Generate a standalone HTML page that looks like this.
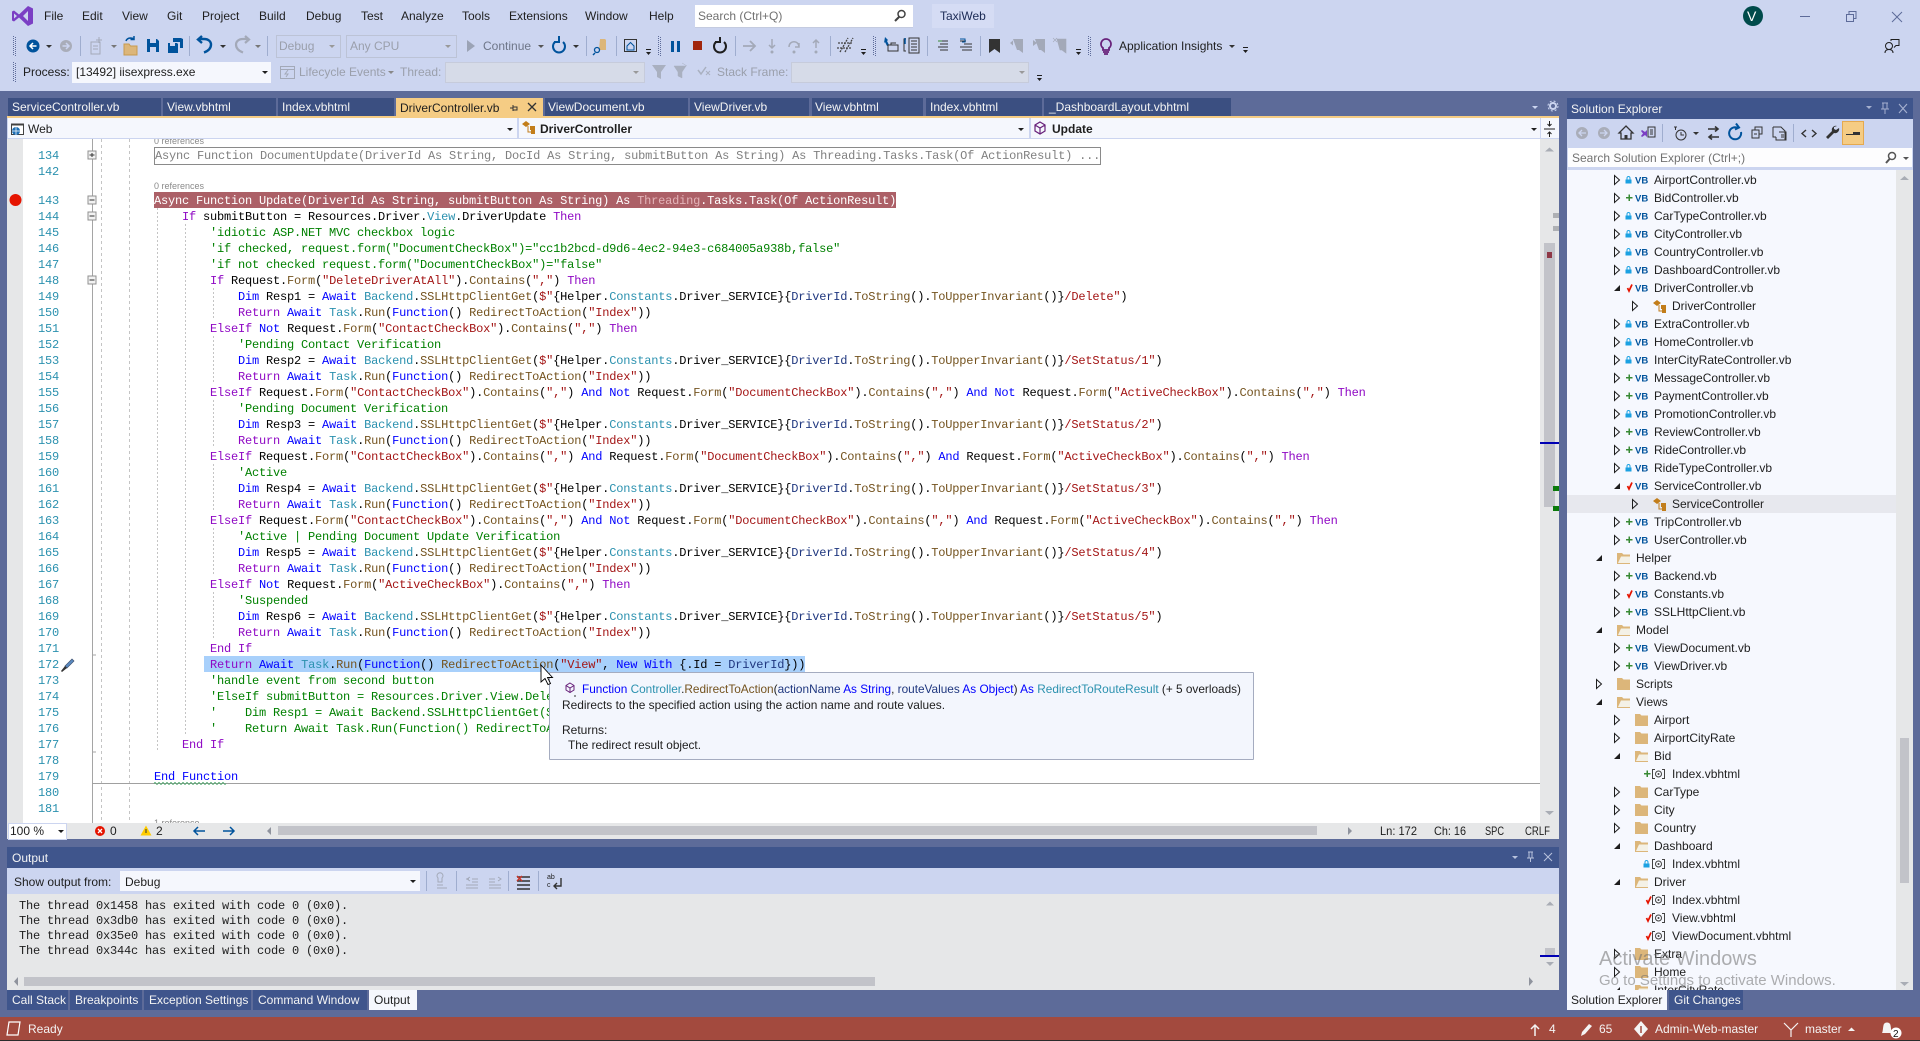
<!DOCTYPE html>
<html lang="en"><head><meta charset="utf-8"><title>TaxiWeb - Visual Studio</title>
<style>
html,body{margin:0;padding:0;width:1920px;height:1041px;overflow:hidden;background:#5d6b99}
.b{position:absolute}
pre{position:absolute;margin:0;font:12px/16px "Liberation Mono",monospace;letter-spacing:-.2px;color:#000;white-space:pre}
.k{color:#00f}.c{color:#8f08c4}.t{color:#2b91af}.m{color:#74531f}.s{color:#a31515}.g{color:#008000}.p{color:#1f377f}
svg text{font-family:"Liberation Sans",sans-serif;font-size:12px;fill:#1e1e1e;white-space:pre}
svg .w{fill:#f4f4f4}.d{fill:#9a9fab}
svg .vb{font-weight:bold;font-size:9.5px;fill:#00539c}
svg .mo{font-family:"Liberation Mono",monospace;letter-spacing:-.2px}
svg .rf{font-size:9px;fill:#8a8a8a}
svg .ln{font-family:"Liberation Mono",monospace;letter-spacing:-.2px;fill:#2b91af;text-anchor:end}
</style></head><body>
<div class="b" style="left:0;top:0;width:1920px;height:91px;background:#ccd5f0"></div>
<div class="b" style="left:695px;top:5px;width:218px;height:22px;background:#fff;border-bottom:1px solid #c4cbe0"></div>
<div class="b" style="left:932px;top:4px;width:62px;height:24px;background:#d5dcf4"></div>
<div class="b" style="left:276px;top:35px;width:63px;height:21px;border:1px solid #bcc3d6"></div>
<div class="b" style="left:346px;top:35px;width:109px;height:21px;border:1px solid #bcc3d6"></div>
<div class="b" style="left:72px;top:62px;width:199px;height:21px;background:#f5f7fd"></div>
<div class="b" style="left:445px;top:62px;width:200px;height:21px;background:#d6dbe8;border:1px solid #c6cbdb;box-sizing:border-box"></div>
<div class="b" style="left:791px;top:62px;width:238px;height:21px;background:#d6dbe8;border:1px solid #c6cbdb;box-sizing:border-box"></div>
<!-- tabs -->
<div class="b" style="left:8px;top:98px;width:153px;height:18px;background:#3b4f81"></div>
<div class="b" style="left:163px;top:98px;width:113px;height:18px;background:#3b4f81"></div>
<div class="b" style="left:278px;top:98px;width:116px;height:18px;background:#3b4f81"></div>
<div class="b" style="left:396px;top:98px;width:147px;height:18px;background:#f5cc84"></div>
<div class="b" style="left:545px;top:98px;width:143px;height:18px;background:#3b4f81"></div>
<div class="b" style="left:690px;top:98px;width:119px;height:18px;background:#3b4f81"></div>
<div class="b" style="left:812px;top:98px;width:111px;height:18px;background:#3b4f81"></div>
<div class="b" style="left:926px;top:98px;width:116px;height:18px;background:#3b4f81"></div>
<div class="b" style="left:1044px;top:98px;width:187px;height:18px;background:#3b4f81"></div>
<div class="b" style="left:7px;top:116px;width:1552px;height:2px;background:#f5cc84"></div>
<!-- nav bar -->
<div class="b" style="left:7px;top:118px;width:1552px;height:21px;background:#ccd5f0"></div>
<div class="b" style="left:8px;top:118px;width:509px;height:20px;background:#f5f7fd"></div>
<div class="b" style="left:519px;top:118px;width:510px;height:20px;background:#f5f7fd"></div>
<div class="b" style="left:1031px;top:118px;width:509px;height:20px;background:#f5f7fd"></div>
<div class="b" style="left:1541px;top:118px;width:18px;height:20px;background:#f5f7fd"></div>
<!-- editor -->
<div class="b" style="left:7px;top:139px;width:1533px;height:684px;background:#fff"></div>
<div class="b" style="left:7px;top:139px;width:16px;height:684px;background:#e6e7e8"></div>
<div class="b" style="left:1540px;top:139px;width:19px;height:684px;background:#e6e7e8"></div>
<div class="b" style="left:1544px;top:243px;width:11px;height:264px;background:#c2c3c9"></div>
<div class="b" style="left:154px;top:192px;width:742px;height:16px;background:#ac6067"></div>
<div class="b" style="left:204px;top:656px;width:601px;height:16px;background:#a8d0fb"></div>
<div class="b" style="left:154px;top:147px;width:945px;height:16px;border:1px solid #8a8a8a"></div>
<pre style="left:155px;top:148px;color:#808080">Async Function DocumentUpdate(DriverId As String, DocId As String, submitButton As String) As Threading.Tasks.Task(Of ActionResult) ...</pre>
<pre style="left:154px;top:193px"><span style="color:#fff">Async Function Update(DriverId As String, submitButton As String) As <span style="color:#e3b3b8">Threading</span>.Tasks.Task(Of ActionResult)</span>
    <span class="c">If</span> submitButton = Resources.Driver.<span class="t">View</span>.DriverUpdate <span class="c">Then</span>
        <span class="g">'idiotic ASP.NET MVC checkbox logic</span>
        <span class="g">'if checked, request.form("DocumentCheckBox")="cc1b2bcd-d9d6-4ec2-94e3-c684005a938b,false"</span>
        <span class="g">'if not checked request.form("DocumentCheckBox")="false"</span>
        <span class="c">If</span> Request.<span class="m">Form</span>(<span class="s">"DeleteDriverAtAll"</span>).<span class="m">Contains</span>(<span class="s">","</span>) <span class="c">Then</span>
            <span class="k">Dim</span> Resp1 = <span class="k">Await</span> <span class="t">Backend</span>.<span class="m">SSLHttpClientGet</span>(<span class="s">$"</span>{Helper.<span class="t">Constants</span>.Driver_SERVICE}{<span class="p">DriverId</span>.<span class="m">ToString</span>().<span class="m">ToUpperInvariant</span>()}<span class="s">/Delete"</span>)
            <span class="c">Return</span> <span class="k">Await</span> <span class="t">Task</span>.<span class="m">Run</span>(<span class="k">Function</span>() <span class="m">RedirectToAction</span>(<span class="s">"Index"</span>))
        <span class="c">ElseIf</span> <span class="k">Not</span> Request.<span class="m">Form</span>(<span class="s">"ContactCheckBox"</span>).<span class="m">Contains</span>(<span class="s">","</span>) <span class="c">Then</span>
            <span class="g">'Pending Contact Verification</span>
            <span class="k">Dim</span> Resp2 = <span class="k">Await</span> <span class="t">Backend</span>.<span class="m">SSLHttpClientGet</span>(<span class="s">$"</span>{Helper.<span class="t">Constants</span>.Driver_SERVICE}{<span class="p">DriverId</span>.<span class="m">ToString</span>().<span class="m">ToUpperInvariant</span>()}<span class="s">/SetStatus/1"</span>)
            <span class="c">Return</span> <span class="k">Await</span> <span class="t">Task</span>.<span class="m">Run</span>(<span class="k">Function</span>() <span class="m">RedirectToAction</span>(<span class="s">"Index"</span>))
        <span class="c">ElseIf</span> Request.<span class="m">Form</span>(<span class="s">"ContactCheckBox"</span>).<span class="m">Contains</span>(<span class="s">","</span>) <span class="k">And</span> <span class="k">Not</span> Request.<span class="m">Form</span>(<span class="s">"DocumentCheckBox"</span>).<span class="m">Contains</span>(<span class="s">","</span>) <span class="k">And</span> <span class="k">Not</span> Request.<span class="m">Form</span>(<span class="s">"ActiveCheckBox"</span>).<span class="m">Contains</span>(<span class="s">","</span>) <span class="c">Then</span>
            <span class="g">'Pending Document Verification</span>
            <span class="k">Dim</span> Resp3 = <span class="k">Await</span> <span class="t">Backend</span>.<span class="m">SSLHttpClientGet</span>(<span class="s">$"</span>{Helper.<span class="t">Constants</span>.Driver_SERVICE}{<span class="p">DriverId</span>.<span class="m">ToString</span>().<span class="m">ToUpperInvariant</span>()}<span class="s">/SetStatus/2"</span>)
            <span class="c">Return</span> <span class="k">Await</span> <span class="t">Task</span>.<span class="m">Run</span>(<span class="k">Function</span>() <span class="m">RedirectToAction</span>(<span class="s">"Index"</span>))
        <span class="c">ElseIf</span> Request.<span class="m">Form</span>(<span class="s">"ContactCheckBox"</span>).<span class="m">Contains</span>(<span class="s">","</span>) <span class="k">And</span> Request.<span class="m">Form</span>(<span class="s">"DocumentCheckBox"</span>).<span class="m">Contains</span>(<span class="s">","</span>) <span class="k">And</span> Request.<span class="m">Form</span>(<span class="s">"ActiveCheckBox"</span>).<span class="m">Contains</span>(<span class="s">","</span>) <span class="c">Then</span>
            <span class="g">'Active</span>
            <span class="k">Dim</span> Resp4 = <span class="k">Await</span> <span class="t">Backend</span>.<span class="m">SSLHttpClientGet</span>(<span class="s">$"</span>{Helper.<span class="t">Constants</span>.Driver_SERVICE}{<span class="p">DriverId</span>.<span class="m">ToString</span>().<span class="m">ToUpperInvariant</span>()}<span class="s">/SetStatus/3"</span>)
            <span class="c">Return</span> <span class="k">Await</span> <span class="t">Task</span>.<span class="m">Run</span>(<span class="k">Function</span>() <span class="m">RedirectToAction</span>(<span class="s">"Index"</span>))
        <span class="c">ElseIf</span> Request.<span class="m">Form</span>(<span class="s">"ContactCheckBox"</span>).<span class="m">Contains</span>(<span class="s">","</span>) <span class="k">And</span> <span class="k">Not</span> Request.<span class="m">Form</span>(<span class="s">"DocumentCheckBox"</span>).<span class="m">Contains</span>(<span class="s">","</span>) <span class="k">And</span> Request.<span class="m">Form</span>(<span class="s">"ActiveCheckBox"</span>).<span class="m">Contains</span>(<span class="s">","</span>) <span class="c">Then</span>
            <span class="g">'Active | Pending Document Update Verification</span>
            <span class="k">Dim</span> Resp5 = <span class="k">Await</span> <span class="t">Backend</span>.<span class="m">SSLHttpClientGet</span>(<span class="s">$"</span>{Helper.<span class="t">Constants</span>.Driver_SERVICE}{<span class="p">DriverId</span>.<span class="m">ToString</span>().<span class="m">ToUpperInvariant</span>()}<span class="s">/SetStatus/4"</span>)
            <span class="c">Return</span> <span class="k">Await</span> <span class="t">Task</span>.<span class="m">Run</span>(<span class="k">Function</span>() <span class="m">RedirectToAction</span>(<span class="s">"Index"</span>))
        <span class="c">ElseIf</span> <span class="k">Not</span> Request.<span class="m">Form</span>(<span class="s">"ActiveCheckBox"</span>).<span class="m">Contains</span>(<span class="s">","</span>) <span class="c">Then</span>
            <span class="g">'Suspended</span>
            <span class="k">Dim</span> Resp6 = <span class="k">Await</span> <span class="t">Backend</span>.<span class="m">SSLHttpClientGet</span>(<span class="s">$"</span>{Helper.<span class="t">Constants</span>.Driver_SERVICE}{<span class="p">DriverId</span>.<span class="m">ToString</span>().<span class="m">ToUpperInvariant</span>()}<span class="s">/SetStatus/5"</span>)
            <span class="c">Return</span> <span class="k">Await</span> <span class="t">Task</span>.<span class="m">Run</span>(<span class="k">Function</span>() <span class="m">RedirectToAction</span>(<span class="s">"Index"</span>))
        <span class="c">End If</span>
        <span class="c">Return</span> <span class="k">Await</span> <span class="t">Task</span>.<span class="m">Run</span>(<span class="k">Function</span>() <span class="m">RedirectToAction</span>(<span class="s">"View"</span>, <span class="k">New With</span> {.Id = <span class="p">DriverId</span>}))
        <span class="g">'handle event from second button</span>
        <span class="g">'ElseIf submitButton = Resources.Driver.View.Delete</span>
        <span class="g">'    Dim Resp1 = Await Backend.SSLHttpClientGet($"</span>
        <span class="g">'    Return Await Task.Run(Function() RedirectToAction</span>
    <span class="c">End If</span>

<span class="k">End Function</span></pre>
<!-- tooltip -->
<div class="b" style="left:549px;top:672px;width:703px;height:86px;background:#f3f6fd;border:1px solid #a5acc0;border-radius:1px"></div>
<!-- editor strip -->
<div class="b" style="left:7px;top:823px;width:1552px;height:16px;background:#e6e7e8"></div>
<div class="b" style="left:8px;top:823px;width:57px;height:15px;background:#fff;border:1px solid #ccd5f0"></div>
<div class="b" style="left:278px;top:826px;width:1039px;height:9px;background:#c2c3c9"></div>
<!-- output -->
<div class="b" style="left:7px;top:847px;width:1552px;height:21px;background:#3f558c"></div>
<div class="b" style="left:7px;top:868px;width:1552px;height:26px;background:#ccd5f0"></div>
<div class="b" style="left:120px;top:871px;width:300px;height:20px;background:#f5f7fd"></div>
<div class="b" style="left:7px;top:894px;width:1552px;height:96px;background:#e6e7e8"></div>
<pre style="left:19px;top:899px;line-height:15px;color:#1e1e1e">The thread 0x1458 has exited with code 0 (0x0).
The thread 0x3db0 has exited with code 0 (0x0).
The thread 0x35e0 has exited with code 0 (0x0).
The thread 0x344c has exited with code 0 (0x0).</pre>
<div class="b" style="left:24px;top:977px;width:851px;height:9px;background:#c2c3c9"></div>
<div class="b" style="left:1545px;top:948px;width:10px;height:7px;background:#c2c3c9"></div>
<div class="b" style="left:1540px;top:955px;width:19px;height:2px;background:#0000b4"></div>
<!-- bottom tabs -->
<div class="b" style="left:7px;top:990px;width:61px;height:20px;background:#3f558c"></div>
<div class="b" style="left:70px;top:990px;width:72px;height:20px;background:#3f558c"></div>
<div class="b" style="left:144px;top:990px;width:107px;height:20px;background:#3f558c"></div>
<div class="b" style="left:253px;top:990px;width:114px;height:20px;background:#3f558c"></div>
<div class="b" style="left:369px;top:990px;width:48px;height:20px;background:#f5f7fd"></div>
<!-- solution explorer -->
<div class="b" style="left:1567px;top:98px;width:346px;height:21px;background:#3f558c"></div>
<div class="b" style="left:1567px;top:119px;width:346px;height:28px;background:#ccd5f0"></div>
<div class="b" style="left:1567px;top:147px;width:346px;height:23px;background:#ccd5f0"></div>
<div class="b" style="left:1568px;top:148px;width:344px;height:19px;background:#fdfdfe"></div>
<div class="b" style="left:1567px;top:170px;width:329px;height:820px;background:#f6f8fe"></div>
<div class="b" style="left:1567px;top:495px;width:329px;height:18px;background:#e7e8ee"></div>
<div class="b" style="left:1896px;top:170px;width:17px;height:820px;background:#e6e7e8"></div>
<div class="b" style="left:1900px;top:738px;width:9px;height:145px;background:#c2c3c9"></div>
<div class="b" style="left:1567px;top:990px;width:100px;height:20px;background:#f5f7fd"></div>
<div class="b" style="left:1669px;top:990px;width:74px;height:20px;background:#3f558c"></div>
<div class="b" style="left:1842px;top:121px;width:20px;height:22px;background:#f5cc84;border:1px solid #e5a94f"></div>
<!-- status -->
<div class="b" style="left:0;top:1017px;width:1920px;height:23px;background:#a34a3e"></div>
<div class="b" style="left:0;top:1040px;width:1920px;height:1px;background:#2b2b2b"></div>

<svg class="b" style="left:0;top:0" width="1920" height="1041" viewBox="0 0 1920 1041">
<defs>
<clipPath id="ed"><rect x="7" y="139" width="1533" height="684"/></clipPath>
<clipPath id="tr"><rect x="1567" y="170" width="329" height="820"/></clipPath>
<g id="cr"><path d="M-.5-4.500L4.500 0L-.5 4.500Z" fill="none" stroke="#1e1e1e"/></g>
<g id="ex"><path d="M6-3V3H0Z" fill="#1e1e1e"/></g>
<g id="lk"><path d="M-.5 3.500V-.5h1V-2C.5-3.300 1.500-4 2.500-4S4.500-3.300 4.500-2V-.5h1v4ZM1.500-.5h2V-2c0-.5-.4-1-1-1s-1 .5-1 1Z" fill="#1ba1e2" fill-rule="evenodd"/></g>
<g id="pl"><path d="M2.500-3.500h1.500v2.500h2.500V.5H4V3H2.500V.5H0V-1h2.500Z" fill="#388a34"/></g>
<g id="chk"><path d="M.5 0L2 3L5-3.500" fill="none" stroke="#e51400" stroke-width="1.700"/></g>
<g id="fo"><path d="M0-6h5l1.500 1.500H13V6H0Z" fill="#dcb67a"/></g>
<g id="fop"><path d="M0-5h5l1.500 1.500H13V6H0Z" fill="#dcb67a"/><path d="M4-1.500H13V5H1Z" fill="#f4f1e6"/></g>
<g id="cl"><path d="M4-6L8-3L4 0L0-3ZM8-1h5v4H8ZM9 3h4v4H9Z" fill="#c27d1a"/><path d="M6-1V5H9" fill="none" stroke="#c27d1a"/></g>
<g id="at"><path d="M3-4.500H.5V4.500H3M10-4.500h2.500V4.500H10" fill="none" stroke="#424242"/><circle cx="6.500" cy="0" r="3" fill="none" stroke="#424242"/><circle cx="6.500" cy="0" r="1" fill="#424242"/></g>
<g id="dd"><path d="M0 0h6L3 3Z"/></g>
<g id="ov"><path d="M0 0h5v1H0ZM0 3h5L2.500 6Z" fill="#1e1e1e"/></g>
<g id="gr"><path d="M.5 0V20M2.500 1V20" stroke="#5d6b99" stroke-dasharray="1 1"/></g>
<g id="om"><rect x=".5" y=".5" width="8" height="8" fill="#f2f2f2" stroke="#909090"/><path d="M2 4.500h5" stroke="#333"/></g>
</defs>

<!-- title -->
<path d="M28 6L33 8.500V23.500L28 26L19 17.500L14 21.500L12 20.500V11.500L14 10.500L19 14.500ZM28 11L23 16L28 21ZM14 13.500V18.500L17 16Z" fill="#7b3fc4" fill-rule="evenodd"/>
<text x="44" y="20">File</text><text x="82" y="20">Edit</text><text x="122" y="20">View</text><text x="167" y="20">Git</text><text x="202" y="20">Project</text><text x="259" y="20">Build</text><text x="306" y="20">Debug</text><text x="361" y="20">Test</text><text x="401" y="20">Analyze</text><text x="462" y="20">Tools</text><text x="509" y="20">Extensions</text><text x="585" y="20">Window</text><text x="649" y="20">Help</text>
<text x="698" y="20" fill="#6d6d6d" style="fill:#717171">Search (Ctrl+Q)</text>
<circle cx="901.500" cy="14" r="3.500" fill="none" stroke="#424242" stroke-width="1.500"/><path d="M899 17L895 21" stroke="#424242" stroke-width="2"/>
<text x="940" y="20" style="fill:#1c2b55">TaxiWeb</text>
<circle cx="1753" cy="16" r="10" fill="#004b4b"/><text x="1747" y="21" style="font-size:14px;fill:#fff">V</text>
<path d="M1800 16.500h10" stroke="#5d6b99"/><path d="M1846.500 14.500h7v7h-7ZM1849 14V11.500h7v7h-2" fill="none" stroke="#5d6b99"/><path d="M1892 12L1902 22M1902 12L1892 22" stroke="#5d6b99"/>
<circle cx="1889" cy="46" r="3.500" fill="none" stroke="#1e1e1e"/><path d="M1885 53c0-3 2-3.500 4-3.500s4 .5 4 3.500M1891 41v-1.500h8v6h-3l-2 2" fill="none" stroke="#1e1e1e"/>

<!-- toolbar row 1 -->
<use href="#gr" x="13" y="36"/>
<circle cx="33" cy="46" r="6.500" fill="#00539c"/><path d="M36.500 46h-6M33 43l-3 3 3 3" fill="none" stroke="#fff" stroke-width="1.500"/>
<use href="#dd" x="46" y="45" fill="#333"/>
<circle cx="66" cy="46" r="6" fill="#a9adb9"/><path d="M62.500 46h6M66 43l3 3-3 3" fill="none" stroke="#ccd5f0" stroke-width="1.500"/>
<path d="M80.500 36V56M189.500 36V56M267.500 36V56M586.500 36V56M616.500 36V56M735.500 36V56M830.500 36V56M927.500 36V56M980.500 36V56" stroke="#9fadcf"/>
<path d="M91 42h9v12H91ZM93 46h5M93 49h5" fill="none" stroke="#a3a9b8"/><path d="M99 37v6M96 40h6" stroke="#a3a9b8"/>
<use href="#dd" x="111" y="45" fill="#777"/>
<path d="M124 44h5l1.500 2H137v9H124Z" fill="#dcb67a" stroke="#c79b4f"/><path d="M126 41c1-3 5-4 8-2M134 36v3.500h-3.500" fill="none" stroke="#00539c" stroke-width="1.500"/>
<path d="M147 39h10l2 2v11h-12ZM150 39v4h6v-4ZM150 47h6v5h-6Z" fill="#00539c" fill-rule="evenodd"/>
<path d="M168 43h9l1 1v9h-10ZM170 43v3h5v-3Z M173 38h8l2 1v9h-3V42h-7Z" fill="#00539c" fill-rule="evenodd"/>
<path d="M199 39h5c5 0 7 3 7 5.500c0 4-3 6.500-7 8M202 36l-4 3.500 4 3.500" fill="none" stroke="#00539c" stroke-width="2.400"/>
<use href="#dd" x="220" y="45" fill="#333"/>
<path d="M248 39h-5c-5 0-7 3-7 5.500c0 4 3 6.500 7 8M245 36l4 3.500-4 3.500" fill="none" stroke="#a3a9b8" stroke-width="2.200"/>
<use href="#dd" x="255" y="45" fill="#777"/>
<text x="279" y="50" class="d">Debug</text><use href="#dd" x="329" y="45" fill="#999"/>
<text x="350" y="50" class="d">Any CPU</text><use href="#dd" x="445" y="45" fill="#999"/>
<path d="M467 40L475 46L467 52Z" fill="#9ba3b5"/><text x="483" y="50" style="fill:#6e7688">Continue</text><use href="#dd" x="538" y="45" fill="#555"/>
<path d="M555 42a6 6 0 1 0 8 0M559 36v6h-5" fill="none" stroke="#00539c" stroke-width="2"/>
<use href="#dd" x="573" y="45" fill="#333"/>
<path d="M600 39h5l1 1v10h-7" fill="#dcb67a"/><circle cx="597" cy="50" r="2.500" fill="none" stroke="#00539c" stroke-width="1.300"/><path d="M595 53l-2 2" stroke="#00539c" stroke-width="1.500"/>
<rect x="624.500" y="39.500" width="12" height="12" fill="none" stroke="#333"/><path d="M627 46l3.500-3.500L634 46v4h-7Z" fill="none" stroke="#00539c"/>
<use href="#ov" x="646" y="49"/><use href="#gr" x="658" y="36"/>
<path d="M671 41h3v11h-3ZM677 41h3v11h-3Z" fill="#00539c"/>
<rect x="693" y="41" width="9" height="9" fill="#a1260d"/>
<path d="M716 42a6 6 0 1 0 8 0M720 37v5h-5" fill="none" stroke="#1e1e1e" stroke-width="2"/>
<path d="M743 46h12M750 41l5 5-5 5" fill="none" stroke="#a3a9b8" stroke-width="1.800"/>
<path d="M772 39v8M769 45l3 3 3-3" fill="none" stroke="#a3a9b8" stroke-width="1.500"/><circle cx="772" cy="52" r="1.500" fill="#a3a9b8"/>
<path d="M789 47c0-7 10-7 10 0M799 43v4h-4" fill="none" stroke="#a3a9b8" stroke-width="1.500"/><circle cx="794" cy="52" r="1.500" fill="#a3a9b8"/>
<path d="M816 48v-8M813 43l3-3 3 3" fill="none" stroke="#a3a9b8" stroke-width="1.500"/><circle cx="816" cy="52" r="1.500" fill="#a3a9b8"/>
<path d="M840 52L848 38M845 52L853 38M838 43H853M837 48H852" stroke="#454545" stroke-width="1.300" stroke-dasharray="2 1"/>
<use href="#ov" x="861" y="49"/><use href="#gr" x="873" y="36"/>
<path d="M885 37l3 3-1 1 2 4-2 1-2-4-1 1Z" fill="#00539c"/><path d="M888 45h10v6h-10ZM891 45v-2h5" fill="none" stroke="#333"/>
<path d="M906 39h-2v12h2M909 38h10v15h-10ZM911 41h6M911 44h6M911 47h6M911 50h6" fill="none" stroke="#333"/><path d="M905 38v6" stroke="#00539c" stroke-width="1.500"/>
<path d="M938 41h10M940 44h8M938 47h10M940 50h8" stroke="#333"/><path d="M938 41h4" stroke="#388a34"/>
<path d="M960 41h6M964 44h8M960 47h12M962 50h10" stroke="#333"/><path d="M960 39h5v3h-3" fill="none" stroke="#00539c"/>
<path d="M989 39h11v14l-5.500-4L989 53Z" fill="#333"/>
<path d="M1013 39h10v14l-4-3-2 0ZM1010 43l3-2.500v5" fill="#a3a9b8"/>
<path d="M1035 39h10v14l-4-3-2 0ZM1033 40l4 3-4 3" fill="#a3a9b8"/>
<path d="M1057 39h9v14l-4-3-2 0ZM1053 38l4 4M1057 38l-4 4" fill="#a3a9b8" stroke="#a3a9b8" stroke-width=".6"/>
<use href="#ov" x="1076" y="49"/><use href="#gr" x="1088" y="36"/>
<path d="M1106 39a5 5 0 0 1 3 9v2h-6v-2a5 5 0 0 1 3-9ZM1103 52h6M1104 54h4" fill="none" stroke="#68217a" stroke-width="1.800"/>
<text x="1119" y="50">Application Insights</text><use href="#dd" x="1229" y="45" fill="#333"/><use href="#ov" x="1243" y="47"/>

<!-- toolbar row 2 -->
<use href="#gr" x="13" y="62"/>
<text x="23" y="76">Process:</text><text x="76" y="76">[13492] iisexpress.exe</text><use href="#dd" x="262" y="71" fill="#1e1e1e"/>
<rect x="280.500" y="66.500" width="14" height="12" fill="none" stroke="#a3a9b8"/><path d="M280 69.500h14M288 70l-3 4h3l-2 3" fill="none" stroke="#a3a9b8"/>
<text x="299" y="76" class="d">Lifecycle Events</text><use href="#dd" x="388" y="71" fill="#888"/>
<text x="400" y="76" class="d">Thread:</text><use href="#dd" x="633" y="71" fill="#999"/>
<path d="M652 65h14l-5 7v7l-4-2v-5Z" fill="#a9b0c0"/><path d="M674 66h12l-4 6v6l-4-2v-4ZM682 63l5 3" fill="#a9b0c0" stroke="#a9b0c0" stroke-width=".5"/><path d="M698 70l3 4 5-7" fill="none" stroke="#a9b0c0" stroke-width="1.500"/><path d="M706 71l4 4M710 71l-4 4" stroke="#a9b0c0"/>
<text x="717" y="76" class="d">Stack Frame:</text><use href="#dd" x="1019" y="71" fill="#999"/><use href="#ov" x="1037" y="75"/>

<!-- tabs -->
<g class="tabs"><text x="12" y="111" class="w">ServiceController.vb</text><text x="167" y="111" class="w">View.vbhtml</text><text x="282" y="111" class="w">Index.vbhtml</text><text x="400" y="112">DriverController.vb</text><text x="548" y="111" class="w">ViewDocument.vb</text><text x="694" y="111" class="w">ViewDriver.vb</text><text x="815" y="111" class="w">View.vbhtml</text><text x="930" y="111" class="w">Index.vbhtml</text><text x="1049" y="111" class="w">_DashboardLayout.vbhtml</text></g>
<path d="M510 108h3M513 105v6M513 107h4v3h-4" fill="none" stroke="#333"/><path d="M528 103l8 8M536 103l-8 8" stroke="#333" stroke-width="1.300"/>
<use href="#dd" x="1532" y="106" fill="#ccd5f0"/><circle cx="1553" cy="106" r="3" fill="none" stroke="#ccd5f0" stroke-width="2"/><circle cx="1553" cy="106" r="5" fill="none" stroke="#ccd5f0" stroke-dasharray="2 2"/>

<!-- nav -->
<rect x="11.500" y="124.500" width="12" height="10" fill="#fff" stroke="#424242"/><path d="M11 124.500h13" stroke="#424242" stroke-width="2"/><circle cx="16" cy="131" r="4" fill="#1f6fb5"/><path d="M12 131h8M16 127v8" stroke="#fff" stroke-width=".7"/>
<text x="28" y="133">Web</text><use href="#dd" x="507" y="128" fill="#1e1e1e"/>
<use href="#cl" x="522" y="127"/><text x="540" y="133" style="font-weight:bold">DriverController</text><use href="#dd" x="1018" y="128" fill="#1e1e1e"/>
<path d="M1040 122l5 3v6l-5 3-5-3v-6ZM1035 125l5 3 5-3M1040 128v6" fill="none" stroke="#68217a" stroke-width="1.200"/><text x="1052" y="133" style="font-weight:bold">Update</text><use href="#dd" x="1531" y="128" fill="#1e1e1e"/>
<path d="M1544 129h11M1549.500 121v5M1547.500 124l2 2 2-2M1549.500 137v-5M1547.500 134l2-2 2 2" fill="none" stroke="#1e1e1e"/>

<!-- gutter and margins -->
<path d="M92.500 139V823" stroke="#a5a5a5"/>
<path d="M101.500 139V823M129.500 139V823" stroke="#c4c4c4" stroke-dasharray="3 3"/>
<path d="M157.500 208V752M185.500 224V736M213.500 288V320M213.500 336V384M213.500 400V448M213.500 464V512M213.500 528V576M213.500 592V640" stroke="#c4c4c4" stroke-dasharray="2 2"/>
<path d="M92 655h4M92 752h4" stroke="#a5a5a5"/>
<path d="M92 783.500H1540" stroke="#a0a0a0"/>
<path d="M154 783.500q1-2 2 0t2 0t2 0t2 0t2 0t2 0t2 0t2 0t2 0t2 0t2 0t2 0t2 0t2 0t2 0t2 0t2 0t2 0t2 0t2 0t2 0t2 0t2 0t2 0t2 0t2 0t2 0t2 0t2 0t2 0t2 0t2 0t2 0t2 0t2 0t2 0" fill="none" stroke="#3ba55d" stroke-width=".8"/>
<use href="#om" x="87.500" y="150.500"/><path d="M92 153v4" stroke="#333"/>
<use href="#om" x="87.500" y="195.500"/><use href="#om" x="87.500" y="211.500"/><use href="#om" x="87.500" y="275.500"/>
<circle cx="15.500" cy="200" r="6" fill="#e51400"/>
<g class="ln-wrap"><text class="ln" x="59" y="159">134</text><text class="ln" x="59" y="175">142</text><text class="ln" x="59" y="204">143</text><text class="ln" x="59" y="220">144</text><text class="ln" x="59" y="236">145</text><text class="ln" x="59" y="252">146</text><text class="ln" x="59" y="268">147</text><text class="ln" x="59" y="284">148</text><text class="ln" x="59" y="300">149</text><text class="ln" x="59" y="316">150</text><text class="ln" x="59" y="332">151</text><text class="ln" x="59" y="348">152</text><text class="ln" x="59" y="364">153</text><text class="ln" x="59" y="380">154</text><text class="ln" x="59" y="396">155</text><text class="ln" x="59" y="412">156</text><text class="ln" x="59" y="428">157</text><text class="ln" x="59" y="444">158</text><text class="ln" x="59" y="460">159</text><text class="ln" x="59" y="476">160</text><text class="ln" x="59" y="492">161</text><text class="ln" x="59" y="508">162</text><text class="ln" x="59" y="524">163</text><text class="ln" x="59" y="540">164</text><text class="ln" x="59" y="556">165</text><text class="ln" x="59" y="572">166</text><text class="ln" x="59" y="588">167</text><text class="ln" x="59" y="604">168</text><text class="ln" x="59" y="620">169</text><text class="ln" x="59" y="636">170</text><text class="ln" x="59" y="652">171</text><text class="ln" x="59" y="668">172</text><text class="ln" x="59" y="684">173</text><text class="ln" x="59" y="700">174</text><text class="ln" x="59" y="716">175</text><text class="ln" x="59" y="732">176</text><text class="ln" x="59" y="748">177</text><text class="ln" x="59" y="764">178</text><text class="ln" x="59" y="780">179</text><text class="ln" x="59" y="796">180</text><text class="ln" x="59" y="812">181</text></g>
<g clip-path="url(#ed)"><text class="rf" x="154" y="144">0 references</text><text class="rf" x="154" y="189">0 references</text><text class="rf" x="154" y="826">1 reference</text></g>
<path d="M65 666l7-7 2 2-7 7Z" fill="#5a8ac0" stroke="#3d4f6f" stroke-width=".7"/><path d="M61 671l4-5 2 2-5 4Z" fill="#333"/>

<!-- editor scrollbar -->
<path d="M1545 151.500l4.500-4 4.500 4ZM1545 811l4.500 4 4.500-4Z" fill="#a9adb5"/>
<rect x="1553" y="213" width="6" height="5" fill="#aeb0b4"/><rect x="1553" y="226" width="6" height="5" fill="#aeb0b4"/><rect x="1547" y="252" width="5" height="6" fill="#8f3846"/><rect x="1540" y="442" width="19" height="2" fill="#0000b4"/><rect x="1553" y="486" width="6" height="5" fill="#0b7a0b"/><rect x="1553" y="506" width="6" height="5" fill="#0b7a0b"/>

<!-- strip -->
<text x="10" y="835">100 %</text><use href="#dd" x="58" y="830" fill="#1e1e1e"/>
<circle cx="100" cy="831" r="5" fill="#e51400"/><path d="M98 829l4 4M102 829l-4 4" stroke="#fff" stroke-width="1.300"/><text x="110" y="835">0</text>
<path d="M146 825.500l5.500 10h-11Z" fill="#fc0"/><path d="M146 829v4" stroke="#333"/><text x="156" y="835">2</text>
<path d="M194 831h11M198 827l-4 4 4 4" fill="none" stroke="#00539c" stroke-width="1.500"/><path d="M223 831h11M230 827l4 4-4 4" fill="none" stroke="#00539c" stroke-width="1.500"/>
<path d="M271 827v8l-4-4ZM1348 827v8l4-4Z" fill="#8f939d"/>
<text x="1380" y="835" textLength="37" lengthAdjust="spacingAndGlyphs">Ln: 172</text><text x="1434" y="835" textLength="32" lengthAdjust="spacingAndGlyphs">Ch: 16</text><text x="1485" y="835" textLength="19" lengthAdjust="spacingAndGlyphs">SPC</text><text x="1525" y="835" textLength="25" lengthAdjust="spacingAndGlyphs">CRLF</text>

<!-- tooltip text -->
<path d="M570 683l4 2.500v4.500l-4 2.500-4-2.500v-4.500ZM566 685.500l4 2.500 4-2.500M570 688v4.500" fill="none" stroke="#68217a"/><path d="M575 695l1 1-1 1-1-1Z" fill="#333"/>
<text x="582" y="693" textLength="659" lengthAdjust="spacingAndGlyphs"><tspan fill="#0000e0" style="fill:#00f">Function</tspan> <tspan style="fill:#2b91af">Controller</tspan>.<tspan style="fill:#74531f">RedirectToAction</tspan>(<tspan style="fill:#1f377f">actionName</tspan> <tspan style="fill:#00f">As String</tspan>, <tspan style="fill:#1f377f">routeValues</tspan> <tspan style="fill:#00f">As Object</tspan>) <tspan style="fill:#00f">As</tspan> <tspan style="fill:#2b91af">RedirectToRouteResult</tspan> (+ 5 overloads)</text>
<text x="562" y="709" textLength="383" lengthAdjust="spacingAndGlyphs">Redirects to the specified action using the action name and route values.</text>
<text x="562" y="734">Returns:</text><text x="568" y="749" textLength="133" lengthAdjust="spacingAndGlyphs">The redirect result object.</text>
<path d="M541 665V682l4-3.500 3 6 2.500-1-3-6h5Z" fill="#fff" stroke="#000" stroke-width=".9"/>

<!-- output -->
<text x="12" y="862" class="w">Output</text>
<use href="#dd" x="1512" y="856" fill="#b8c2dd"/><path d="M1528 852h5M1529 852v6h3v-6M1527 858h7M1530.500 858v4" fill="none" stroke="#b8c2dd"/><path d="M1544 853l8 8M1552 853l-8 8" stroke="#b8c2dd"/>
<text x="14" y="886">Show output from:</text><text x="125" y="886">Debug</text><use href="#dd" x="410" y="880" fill="#1e1e1e"/>
<path d="M426.500 871V891M456.500 871V891M508.500 871V891M538.500 871V891" stroke="#9fadcf"/>
<path d="M437 888h10M437 885h6M438 878a3 3 0 1 1 4 0v4h-4Z" fill="none" stroke="#a3a9b8"/>
<path d="M466 879h3M472 879h6M472 882h6M466 885h12M466 888h12M470 877l-3 2 3 2" fill="none" stroke="#a3a9b8"/>
<path d="M489 885h12M489 888h12M489 879h6M489 882h6M498 877l3 2-3 2" fill="none" stroke="#a3a9b8"/>
<path d="M517 877h13M517 881h13M517 885h13M517 889h13" stroke="#333" stroke-width="1.500"/><path d="M517 876l5 5M522 876l-5 5" stroke="#c7362b" stroke-width="1.500"/>
<text x="547" y="879" style="font-size:7px">ab</text><text x="547" y="887" style="font-size:7px">c</text><path d="M561 878v8h-7M557 883l-3 3 3 3" fill="none" stroke="#333" stroke-width="1.400"/>
<path d="M1546 905.500l4-4 4 4ZM1546 962l4 4 4-4Z" fill="#a9adb5"/>
<path d="M18 977v9l-4-4.500ZM1529 977v9l4-4.500Z" fill="#8f939d"/>
<text x="12" y="1004" class="w">Call Stack</text><text x="75" y="1004" class="w">Breakpoints</text><text x="149" y="1004" class="w">Exception Settings</text><text x="258" y="1004" class="w">Command Window</text><text x="374" y="1004">Output</text>

<!-- solution explorer head -->
<text x="1571" y="113" class="w">Solution Explorer</text>
<use href="#dd" x="1866" y="106" fill="#a5b0cf"/><path d="M1882 103h6M1883 103v6h4v-6M1881 109h8M1885 109v5" fill="none" stroke="#a5b0cf"/><path d="M1899 104l8 9M1907 104l-8 9" stroke="#a5b0cf" stroke-width="1.100"/>
<circle cx="1582" cy="133" r="6" fill="#a9adb9"/><path d="M1586 133h-7M1582 130l-3 3 3 3" fill="none" stroke="#ccd5f0" stroke-width="1.300"/>
<circle cx="1604" cy="133" r="6" fill="#a9adb9"/><path d="M1600 133h7M1604 130l3 3-3 3" fill="none" stroke="#ccd5f0" stroke-width="1.300"/>
<path d="M1626 126l7 7h-2v6h-10v-6h-2Z" fill="none" stroke="#333" stroke-width="1.300"/><rect x="1624.500" y="135" width="3" height="4" fill="#333"/>
<path d="M1642 130l3 2 2-2v7l-2-2-3 2-1-1 2-2.500-2-2.500Z" fill="#7b3fc4"/><rect x="1648" y="127" width="7" height="10" fill="none" stroke="#333"/><path d="M1650 130h3M1650 132h3M1650 134h3" stroke="#333"/>
<path d="M1662.500 124V142M1793.500 124V142" stroke="#9fadcf"/>
<circle cx="1681" cy="135" r="5" fill="none" stroke="#333"/><path d="M1681 132v3h3M1674 127h3M1675.500 127v3" fill="none" stroke="#333"/><use href="#dd" x="1693" y="132" fill="#333"/>
<path d="M1708 129h10M1715 126.500l3 2.500-3 2.500M1719 137h-10M1712 134.500l-3 2.500 3 2.500" fill="none" stroke="#333" stroke-width="1.600"/>
<path d="M1738 128a6 6 0 1 0 3 4M1736 123.500l3 4-4 2" fill="none" stroke="#00539c" stroke-width="2"/>
<path d="M1752 130h7v8h-7ZM1755 130v-3h7v7h-3" fill="none" stroke="#333"/><path d="M1754 134h3" stroke="#333"/>
<path d="M1773 127h8l4 4v9h-9v-3M1773 127v10h3M1779 132h7v8h-7" fill="none" stroke="#333"/><path d="M1781 135h3M1781 137h3" stroke="#333"/>
<path d="M1806 130l-4 3.500 4 3.500M1812 130l4 3.500-4 3.500" fill="none" stroke="#333" stroke-width="1.400"/>
<path d="M1837 126a4 4 0 0 0-5 5l-6 6 2 2 6-6a4 4 0 0 0 5-5l-3 2-2-1v-2Z" fill="#333"/>
<path d="M1846 134h7v-2h7v3h-14Z" fill="#333"/>
<text x="1572" y="162" style="fill:#717171">Search Solution Explorer (Ctrl+;)</text>
<circle cx="1892" cy="156" r="3.500" fill="none" stroke="#555" stroke-width="1.500"/><path d="M1889.500 159L1886 163" stroke="#555" stroke-width="2"/><use href="#dd" x="1903" y="157" fill="#555"/>
<path d="M1900 180l4.500-4 4.500 4ZM1900 982l4.500 4 4.500-4Z" fill="#a9adb5"/>

<!-- tree -->
<g clip-path="url(#tr)">
<g transform="translate(0 180)"><use href="#cr" x="1615"/><use href="#lk" x="1626"/><text class="vb" x="1635" y="3.500">VB</text><text x="1654" y="4">AirportController.vb</text></g>
<g transform="translate(0 198)"><use href="#cr" x="1615"/><use href="#pl" x="1626"/><text class="vb" x="1635" y="3.500">VB</text><text x="1654" y="4">BidController.vb</text></g>
<g transform="translate(0 216)"><use href="#cr" x="1615"/><use href="#lk" x="1626"/><text class="vb" x="1635" y="3.500">VB</text><text x="1654" y="4">CarTypeController.vb</text></g>
<g transform="translate(0 234)"><use href="#cr" x="1615"/><use href="#lk" x="1626"/><text class="vb" x="1635" y="3.500">VB</text><text x="1654" y="4">CityController.vb</text></g>
<g transform="translate(0 252)"><use href="#cr" x="1615"/><use href="#lk" x="1626"/><text class="vb" x="1635" y="3.500">VB</text><text x="1654" y="4">CountryController.vb</text></g>
<g transform="translate(0 270)"><use href="#cr" x="1615"/><use href="#lk" x="1626"/><text class="vb" x="1635" y="3.500">VB</text><text x="1654" y="4">DashboardController.vb</text></g>
<g transform="translate(0 288)"><use href="#ex" x="1614"/><use href="#chk" x="1627"/><text class="vb" x="1635" y="3.500">VB</text><text x="1654" y="4">DriverController.vb</text></g>
<g transform="translate(0 306)"><use href="#cr" x="1633"/><use href="#cl" x="1653"/><text x="1672" y="4">DriverController</text></g>
<g transform="translate(0 324)"><use href="#cr" x="1615"/><use href="#lk" x="1626"/><text class="vb" x="1635" y="3.500">VB</text><text x="1654" y="4">ExtraController.vb</text></g>
<g transform="translate(0 342)"><use href="#cr" x="1615"/><use href="#lk" x="1626"/><text class="vb" x="1635" y="3.500">VB</text><text x="1654" y="4">HomeController.vb</text></g>
<g transform="translate(0 360)"><use href="#cr" x="1615"/><use href="#lk" x="1626"/><text class="vb" x="1635" y="3.500">VB</text><text x="1654" y="4">InterCityRateController.vb</text></g>
<g transform="translate(0 378)"><use href="#cr" x="1615"/><use href="#pl" x="1626"/><text class="vb" x="1635" y="3.500">VB</text><text x="1654" y="4">MessageController.vb</text></g>
<g transform="translate(0 396)"><use href="#cr" x="1615"/><use href="#pl" x="1626"/><text class="vb" x="1635" y="3.500">VB</text><text x="1654" y="4">PaymentController.vb</text></g>
<g transform="translate(0 414)"><use href="#cr" x="1615"/><use href="#lk" x="1626"/><text class="vb" x="1635" y="3.500">VB</text><text x="1654" y="4">PromotionController.vb</text></g>
<g transform="translate(0 432)"><use href="#cr" x="1615"/><use href="#pl" x="1626"/><text class="vb" x="1635" y="3.500">VB</text><text x="1654" y="4">ReviewController.vb</text></g>
<g transform="translate(0 450)"><use href="#cr" x="1615"/><use href="#pl" x="1626"/><text class="vb" x="1635" y="3.500">VB</text><text x="1654" y="4">RideController.vb</text></g>
<g transform="translate(0 468)"><use href="#cr" x="1615"/><use href="#lk" x="1626"/><text class="vb" x="1635" y="3.500">VB</text><text x="1654" y="4">RideTypeController.vb</text></g>
<g transform="translate(0 486)"><use href="#ex" x="1614"/><use href="#chk" x="1627"/><text class="vb" x="1635" y="3.500">VB</text><text x="1654" y="4">ServiceController.vb</text></g>
<g transform="translate(0 504)"><use href="#cr" x="1633"/><use href="#cl" x="1653"/><text x="1672" y="4">ServiceController</text></g>
<g transform="translate(0 522)"><use href="#cr" x="1615"/><use href="#pl" x="1626"/><text class="vb" x="1635" y="3.500">VB</text><text x="1654" y="4">TripController.vb</text></g>
<g transform="translate(0 540)"><use href="#cr" x="1615"/><use href="#pl" x="1626"/><text class="vb" x="1635" y="3.500">VB</text><text x="1654" y="4">UserController.vb</text></g>
<g transform="translate(0 558)"><use href="#ex" x="1596"/><use href="#fop" x="1617"/><text x="1636" y="4">Helper</text></g>
<g transform="translate(0 576)"><use href="#cr" x="1615"/><use href="#pl" x="1626"/><text class="vb" x="1635" y="3.500">VB</text><text x="1654" y="4">Backend.vb</text></g>
<g transform="translate(0 594)"><use href="#cr" x="1615"/><use href="#chk" x="1627"/><text class="vb" x="1635" y="3.500">VB</text><text x="1654" y="4">Constants.vb</text></g>
<g transform="translate(0 612)"><use href="#cr" x="1615"/><use href="#pl" x="1626"/><text class="vb" x="1635" y="3.500">VB</text><text x="1654" y="4">SSLHttpClient.vb</text></g>
<g transform="translate(0 630)"><use href="#ex" x="1596"/><use href="#fop" x="1617"/><text x="1636" y="4">Model</text></g>
<g transform="translate(0 648)"><use href="#cr" x="1615"/><use href="#pl" x="1626"/><text class="vb" x="1635" y="3.500">VB</text><text x="1654" y="4">ViewDocument.vb</text></g>
<g transform="translate(0 666)"><use href="#cr" x="1615"/><use href="#pl" x="1626"/><text class="vb" x="1635" y="3.500">VB</text><text x="1654" y="4">ViewDriver.vb</text></g>
<g transform="translate(0 684)"><use href="#cr" x="1597"/><use href="#fo" x="1617"/><text x="1636" y="4">Scripts</text></g>
<g transform="translate(0 702)"><use href="#ex" x="1596"/><use href="#fop" x="1617"/><text x="1636" y="4">Views</text></g>
<g transform="translate(0 720)"><use href="#cr" x="1615"/><use href="#fo" x="1635"/><text x="1654" y="4">Airport</text></g>
<g transform="translate(0 738)"><use href="#cr" x="1615"/><use href="#fo" x="1635"/><text x="1654" y="4">AirportCityRate</text></g>
<g transform="translate(0 756)"><use href="#ex" x="1614"/><use href="#fop" x="1635"/><text x="1654" y="4">Bid</text></g>
<g transform="translate(0 774)"><use href="#pl" x="1644"/><use href="#at" x="1652"/><text x="1672" y="4">Index.vbhtml</text></g>
<g transform="translate(0 792)"><use href="#cr" x="1615"/><use href="#fo" x="1635"/><text x="1654" y="4">CarType</text></g>
<g transform="translate(0 810)"><use href="#cr" x="1615"/><use href="#fo" x="1635"/><text x="1654" y="4">City</text></g>
<g transform="translate(0 828)"><use href="#cr" x="1615"/><use href="#fo" x="1635"/><text x="1654" y="4">Country</text></g>
<g transform="translate(0 846)"><use href="#ex" x="1614"/><use href="#fop" x="1635"/><text x="1654" y="4">Dashboard</text></g>
<g transform="translate(0 864)"><use href="#lk" x="1644"/><use href="#at" x="1652"/><text x="1672" y="4">Index.vbhtml</text></g>
<g transform="translate(0 882)"><use href="#ex" x="1614"/><use href="#fop" x="1635"/><text x="1654" y="4">Driver</text></g>
<g transform="translate(0 900)"><use href="#chk" x="1646"/><use href="#at" x="1652"/><text x="1672" y="4">Index.vbhtml</text></g>
<g transform="translate(0 918)"><use href="#chk" x="1646"/><use href="#at" x="1652"/><text x="1672" y="4">View.vbhtml</text></g>
<g transform="translate(0 936)"><use href="#chk" x="1646"/><use href="#at" x="1652"/><text x="1672" y="4">ViewDocument.vbhtml</text></g>
<g transform="translate(0 954)"><use href="#cr" x="1615"/><use href="#fo" x="1635"/><text x="1654" y="4">Extra</text></g>
<g transform="translate(0 972)"><use href="#cr" x="1615"/><use href="#fo" x="1635"/><text x="1654" y="4">Home</text></g>
<g transform="translate(0 990)"><use href="#ex" x="1614"/><use href="#fop" x="1635"/><text x="1654" y="4">InterCityRate</text></g>
</g>
<text x="1571" y="1004">Solution Explorer</text><text x="1674" y="1004" class="w">Git Changes</text>

<!-- status bar -->
<path d="M7 1035l2-13h11l-2 13Z" fill="none" stroke="#fff" stroke-width="1.200"/>
<text x="28" y="1033" class="w">Ready</text>
<path d="M1535 1036v-11M1531 1029l4-4 4 4" fill="none" stroke="#f4f4f4" stroke-width="1.500"/><text x="1549" y="1033" class="w">4</text>
<path d="M1581 1036l1-4 7-8 3 2-7 8Z" fill="#f4f4f4"/><text x="1599" y="1033" class="w">65</text>
<path d="M1641 1021l7 8-7 8-7-8Z" fill="#f4f4f4"/><path d="M1641 1026v7" stroke="#a34a3e" stroke-width="1.500"/>
<text x="1655" y="1033" class="w">Admin-Web-master</text>
<path d="M1784 1023l7 7 7-7M1791 1030v7" fill="none" stroke="#f4f4f4" stroke-width="1.200"/><text x="1805" y="1033" class="w">master</text><path d="M1848 1031h7l-3.500-3.500Z" fill="#f4f4f4"/>
<path d="M1882 1033c1-1 1-8 2-9 1-2 5-2 6 0 1 1 1 8 2 9Z" fill="#f4f4f4"/><circle cx="1896" cy="1033" r="5.500" fill="#fff"/><text x="1893" y="1037" style="font-size:10px;fill:#111">2</text>

<!-- watermark -->
<text x="1599" y="965" style="font-size:20px;fill:rgba(110,110,110,.55)">Activate Windows</text>
<text x="1599" y="985" style="font-size:15px;fill:rgba(110,110,110,.55)">Go to Settings to activate Windows.</text>
</svg>
</body></html>
